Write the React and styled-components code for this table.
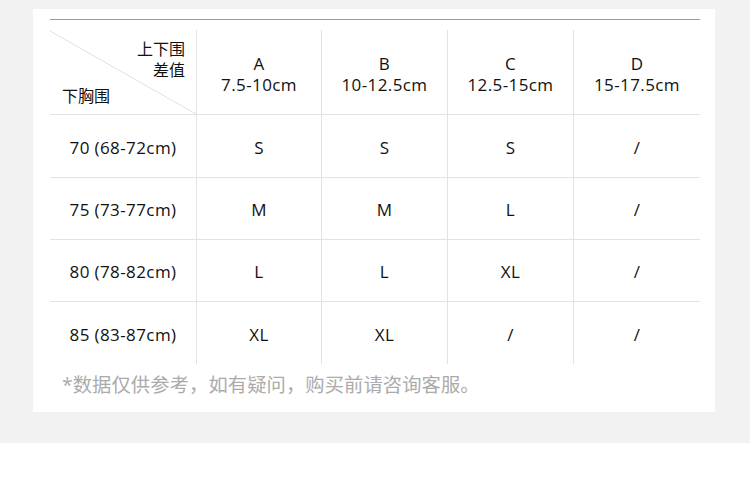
import React from 'react';
import styled, {createGlobalStyle} from 'styled-components';

const GlobalStyle = createGlobalStyle`
  html, body {
    margin: 0;
    padding: 0;
    background: #ffffff;
  }
  body {
    font-family: "Open Sans", "Noto Sans CJK SC", sans-serif;
    color: #222;
  }
`;

// Size chart data //
const columns = [
  {letter: 'A', range: '7.5-10cm'},
  {letter: 'B', range: '10-12.5cm'},
  {letter: 'C', range: '12.5-15cm'},
  {letter: 'D', range: '15-17.5cm'},
];

const rows = [
  {band: '70 (68-72cm)', sizes: ['S', 'S', 'S', '/']},
  {band: '75 (73-77cm)', sizes: ['M', 'M', 'L', '/']},
  {band: '80 (78-82cm)', sizes: ['L', 'L', 'XL', '/']},
  {band: '85 (83-87cm)', sizes: ['XL', 'XL', '/', '/']},
];

const widths = [147, 125, 126, 126, 126];
// //////////////////////////////////////////////////

const Page = styled.div`
  background: #f2f2f2;
  padding: 9px 35px 31px 33px;
  height: 443px;
  box-sizing: border-box;
`;

const Card = styled.section`
  background: #fff;
  width: 682px;
  height: 403px;
  box-sizing: border-box;
  padding: 10px 15px 0 16px;
`;

const Rule = styled.div`
  height: 1px;
  background: #9a9a9a;
  margin-left: 1px;
  margin-bottom: 10px;
`;

const Grid = styled.div`
  display: grid;
  grid-template-columns: ${widths.map((w) => `${w}px`).join(' ')};
  width: 650px;
  margin-left: 1px;
`;

const Cell = styled.div`
  box-sizing: border-box;
  height: ${(p) => p.$h}px;
  padding-top: 3px;
  border-right: ${(p) => (p.$last ? 'none' : '1px solid #e3e3e3')};
  border-bottom: ${(p) => (p.$bottom ? '1px solid #e3e3e3' : 'none')};
  display: flex;
  flex-direction: column;
  align-items: center;
  justify-content: center;
  font-size: 17px;
  letter-spacing: 0.4px;
  line-height: 20px;
  color: #111;
`;

const HeadCell = styled(Cell)`
  padding-top: 4px;
  line-height: 21px;
`;

const Corner = styled.div`
  position: relative;
  box-sizing: border-box;
  height: 85px;
  border-right: 1px solid #e3e3e3;
  border-bottom: 1px solid #e3e3e3;
  padding: 9px 11px 0 12px;
  font-size: 16px;
  line-height: 21px;
  color: #111;
`;

const Diagonal = styled.svg`
  position: absolute;
  left: 0;
  top: 0;
  width: 100%;
  height: 100%;
`;

const CornerTop = styled.div`
  position: relative;
  text-align: right;
`;

const CornerBottom = styled.div`
  position: relative;
  margin-top: 5px;
`;

const Note = styled.p`
  margin: 10px 0 0 13px;
  font-size: 19.3px;
  line-height: 22px;
  color: #ababab;
  letter-spacing: 0.1px;
`;

function App() {
  return (
    <>
      <GlobalStyle />
      <Page>
        <Card>
          <Rule />
          <Grid>
            <Corner>
              <Diagonal viewBox="0 0 147 85" preserveAspectRatio="none">
                <line x1="0" y1="1" x2="147" y2="85" stroke="#e0e0e0" strokeWidth="1" />
              </Diagonal>
              <CornerTop>上下围<br />差值</CornerTop>
              <CornerBottom>下胸围</CornerBottom>
            </Corner>
            {columns.map((c, i) => (
              <HeadCell key={c.letter} $h={85} $bottom $last={i === columns.length - 1}>
                <span>{c.letter}</span>
                <span>{c.range}</span>
              </HeadCell>
            ))}
            {rows.map((r, ri) => (
              <React.Fragment key={r.band}>
                <Cell $h={ri === 0 ? 63 : 62} $bottom={ri < rows.length - 1}>{r.band}</Cell>
                {r.sizes.map((s, si) => (
                  <Cell
                    key={si}
                    $h={ri === 0 ? 63 : 62}
                    $bottom={ri < rows.length - 1}
                    $last={si === r.sizes.length - 1}
                  >
                    {s}
                  </Cell>
                ))}
              </React.Fragment>
            ))}
          </Grid>
          <Note>*数据仅供参考，如有疑问，购买前请咨询客服。</Note>
        </Card>
      </Page>
    </>
  );
}

export default App;
